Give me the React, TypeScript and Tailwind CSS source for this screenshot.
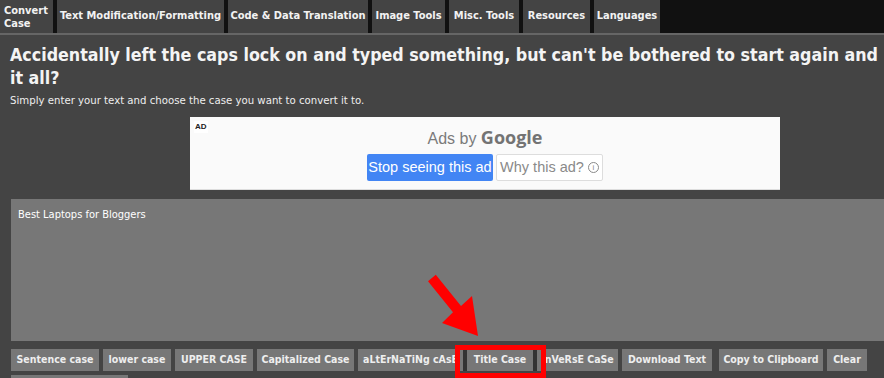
import React from "react";

const tabs: { label: React.ReactNode; w: string }[] = [
  { label: <span className="leading-[13px] text-left block">Convert<br />Case</span>, w: "w-[53px]" },
  { label: "Text Modification/Formatting", w: "w-[167px]" },
  { label: "Code & Data Translation", w: "w-[140px]" },
  { label: "Image Tools", w: "w-[73px]" },
  { label: "Misc. Tools", w: "w-[70px]" },
  { label: "Resources", w: "w-[67px]" },
  { label: "Languages", w: "w-[66px]" },
];

const buttons: { label: string; w: string; extra?: string }[] = [
  { label: "Sentence case", w: "w-[88px]" },
  { label: "lower case", w: "w-[68px]" },
  { label: "UPPER CASE", w: "w-[78px]" },
  { label: "Capitalized Case", w: "w-[97px]" },
  { label: "aLtErNaTiNg cAsE", w: "w-[105px]" },
  { label: "Title Case", w: "w-[66px]", extra: "shadow-[-4px_0_0_#333,4px_0_0_#333]" },
  { label: "InVeRsE CaSe", w: "w-[81px]" },
  { label: "Download Text", w: "w-[90px]" },
  { label: "Copy to Clipboard", w: "w-[104px]", extra: "ml-[3px]" },
  { label: "Clear", w: "w-[40px]" },
  { label: "", w: "w-[117px]" },
];

export default function App() {
  return (
    <div
      className="relative w-[884px] h-[378px] overflow-hidden bg-[#444] text-[#eee]"
      style={{ fontFamily: '"DejaVu Sans Condensed", "DejaVu Sans", Tahoma, sans-serif' }}
    >
      <nav className="flex h-[35px] gap-[4px] bg-[#111] border-b-2 border-[#666]">
        {tabs.map((t, i) => (
          <div
            key={i}
            className={`${t.w} h-[33px] bg-[#444] flex items-center ${i === 0 ? "justify-start pl-[4px]" : "justify-center"} text-[11px] font-bold text-[#f2f2f2] whitespace-nowrap`}
          >
            {t.label}
          </div>
        ))}
      </nav>

      <h1 className="mt-[9px] pl-[10px] text-[17.7px] leading-[23px] font-bold text-[#f4f4f4] whitespace-nowrap">
        Accidentally left the caps lock on and typed something, but can't be bothered to start again and
        <br />
        it all?
      </h1>
      <p className="mt-[4px] pl-[10px] text-[11.3px] leading-[14px] text-[#eee]">
        Simply enter your text and choose the case you want to convert it to.
      </p>

      <div className="relative mt-[9px] ml-[190px] w-[590px] h-[73px] bg-[#fafafa] border-b border-[#ddd] flex flex-col items-center" style={{ fontFamily: '"Liberation Sans", Arial, sans-serif' }}>
        <span className="absolute left-[4px] top-[4px] text-[8px] font-bold text-[#222] bg-white px-[1px]">AD</span>
        <div className="mt-[11px] text-[16px] leading-[18px] text-[#7a7a7a]">
          Ads by <span className="font-bold text-[18px] text-[#737373]" style={{ fontFamily: '"Open Sans", "Liberation Sans", sans-serif' }}>Google</span>
        </div>
        <div className="mt-[6px] flex gap-[3px]">
          <div className="w-[126px] h-[27px] bg-[#4285f4] text-white text-[14.5px] flex items-center justify-center rounded-[2px]">
            Stop seeing this ad
          </div>
          <div className="w-[107px] h-[27px] bg-white border border-[#ddd] text-[#8a8a8a] text-[14.5px] flex items-center justify-center rounded-[2px]">
            Why this ad?
            <span className="ml-[4px] inline-flex items-center justify-center w-[11px] h-[11px] rounded-full border border-[#8a8a8a] text-[8px] leading-none">i</span>
          </div>
        </div>
      </div>

      <textarea
        className="block mt-[9px] ml-[11px] w-[880px] h-[142px] bg-[#777] text-white text-[11px] leading-[15px] pt-[8px] pl-[7px] resize-none outline-none border-0"
        defaultValue="Best Laptops for Bloggers"
        style={{ fontFamily: '"DejaVu Sans Condensed", "DejaVu Sans", Tahoma, sans-serif' }}
      />

      <div className="mt-[8px] ml-[11px] flex flex-wrap gap-x-[4px] gap-y-[4px] w-[870px]">
        {buttons.map((b, i) => (
          <div
            key={i}
            className={`${b.w} ${b.extra ?? ""} h-[22px] bg-[#777] text-[#eee] text-[10.5px] font-bold flex items-center justify-center whitespace-nowrap overflow-hidden`}
          >
            {b.label}
          </div>
        ))}
      </div>

      <div className="absolute left-[455px] top-[345px] w-[91px] h-[33px] border-[5px] border-[#ff0000]" />
      <svg className="absolute left-0 top-0" width="884" height="378" viewBox="0 0 884 378">
        <polygon
          points="428,281.2 435.8,274.8 461,306 472,296 478,336 442,323 453,312.2"
          fill="#ff0000"
        />
      </svg>
    </div>
  );
}
